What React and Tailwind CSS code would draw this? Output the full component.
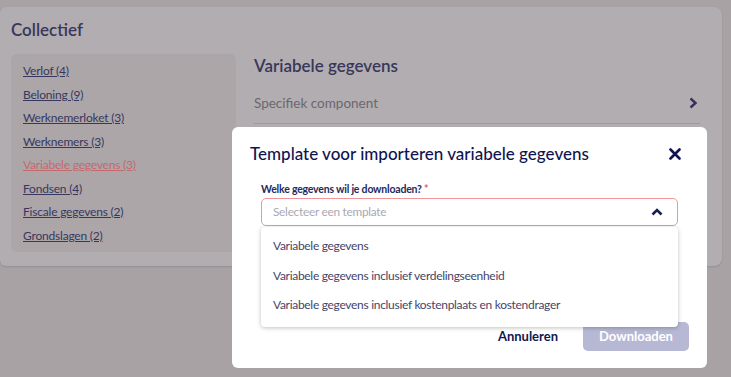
import React from "react";

const links = [
  "Verlof (4)",
  "Beloning (9)",
  "Werknemerloket (3)",
  "Werknemers (3)",
  "Variabele gegevens (3)",
  "Fondsen (4)",
  "Fiscale gegevens (2)",
  "Grondslagen (2)",
];

export default function App() {
  return (
    <div
      className="relative w-[731px] h-[377px] overflow-hidden bg-[#a8a2a5]"
      style={{ fontFamily: "Lato, 'Noto Sans', sans-serif" }}
    >
      <div className="pt-[7px] pr-[9px]">
        <div className="h-[259px] rounded-r-[8px] rounded-l-[6px] bg-[#b2adb0] shadow-[0_1px_2px_rgba(0,0,0,0.12)] px-[11px] pt-[12px] flex flex-col">
          <h1 className="text-[17px] font-semibold text-[#38375a] leading-[22px]">Collectief</h1>
          <div className="flex mt-[13px] gap-[18px]">
            <div className="w-[225px] h-[198px] rounded-[6px] bg-[#aca6a9] pl-[12px] pt-[5px] flex flex-col">
              {links.map((l, i) => (
                <a
                  key={l}
                  className={
                    "underline text-[12px] tracking-[-0.2px] leading-[23.5px] w-fit " +
                    (i === 4 ? "text-[#c4696c]" : "text-[#37375f]")
                  }
                >
                  {l}
                </a>
              ))}
            </div>
            <div className="flex-1 pt-[1px] pr-[11px]">
              <h2 className="text-[17px] font-semibold text-[#38375a] leading-[22px]">Variabele gegevens</h2>
              <div className="mt-[16px] h-[31px] flex items-start justify-between border-b border-[#9f999c]">
                <span className="text-[13.5px] leading-[20px] text-[#6b6770]">Specifiek component</span>
                <svg width="10" height="12" viewBox="0 0 10 12" className="mt-[4px] mr-[2px]">
                  <path d="M2.5 1.5 L7.5 6 L2.5 10.5" fill="none" stroke="#33325a" strokeWidth="2.4" />
                </svg>
              </div>
            </div>
          </div>
        </div>
      </div>

      <div className="absolute left-[232px] top-[127px] w-[475px] h-[241px] bg-white rounded-[6px] flex flex-col">
        <div className="flex items-center justify-between pl-[18px] pr-[26px] pt-[15px]">
          <h3 className="text-[17px] font-medium text-[#101450] leading-[24px]">
            Template voor importeren variabele gegevens
          </h3>
          <svg width="12" height="12" viewBox="0 0 12 12">
            <path d="M1.5 1.5 L10.5 10.5 M10.5 1.5 L1.5 10.5" stroke="#101450" strokeWidth="2.6" strokeLinecap="round" />
          </svg>
        </div>
        <div className="pl-[29px] pr-[29px] mt-[16px]">
          <div className="text-[10.5px] tracking-[-0.2px] font-bold text-[#1f2a5e] leading-[14px]">
            Welke gegevens wil je downloaden? <span className="text-[#e05560]">*</span>
          </div>
          <div className="relative mt-[2px] h-[28px] border border-[#f2959b] rounded-[5px] flex items-center justify-between pl-[11px] pr-[14px]">
            <span className="text-[11.8px] tracking-[-0.25px] text-[#a9a9b2]">Selecteer een template</span>
            <svg width="12" height="8" viewBox="0 0 12 8">
              <path d="M1.5 6.5 L6 2 L10.5 6.5" fill="none" stroke="#1a1f55" strokeWidth="2.6" />
            </svg>
            <div className="absolute left-[-1px] right-[-1px] top-[28px] h-[100px] bg-white rounded-[4px] shadow-[0_1px_4px_rgba(0,0,0,0.25)] z-10 pl-[12px] pt-[4px] flex flex-col">
              {[
                "Variabele gegevens",
                "Variabele gegevens inclusief verdelingseenheid",
                "Variabele gegevens inclusief kostenplaats en kostendrager",
              ].map((o) => (
                <div key={o} className="text-[12px] tracking-[-0.3px] text-[#45456a] leading-[29.5px]">
                  {o}
                </div>
              ))}
            </div>
          </div>
        </div>
        <div className="flex justify-end items-center mt-auto mb-[17px] pr-[18px] gap-[25px]">
          <span className="text-[13px] font-bold text-[#101850]">Annuleren</span>
          <div className="w-[106px] h-[29px] rounded-[5px] bg-[#b7b8d4] flex items-center justify-center text-[13px] font-bold text-white">
            Downloaden
          </div>
        </div>
      </div>
    </div>
  );
}
